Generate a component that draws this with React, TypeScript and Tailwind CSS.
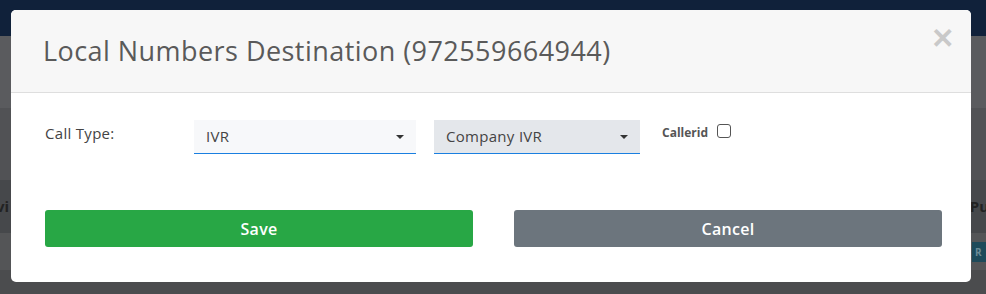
function Caret() {
  return (
    <svg width="8" height="4" viewBox="0 0 8 4" className="shrink-0">
      <path d="M0 0h8L4 4z" fill="#333" />
    </svg>
  )
}

function SelectBox({ value, width, bg }: { value: string; width: string; bg: string }) {
  return (
    <div className={`${width} ${bg} h-[34px] flex items-center justify-between pl-3 pr-[12px] border-b border-b-[#1a7fe0]`}>
      <span className="text-[15px] text-[#444] tracking-[0.3px]">{value}</span>
      <Caret />
    </div>
  )
}

export default function App() {
  return (
    <div className="relative w-[986px] h-[294px] overflow-hidden bg-[#4d4e50]" style={{ fontFamily: '"Open Sans", "Liberation Sans", sans-serif' }}>
      {/* page behind the overlay */}
      <div className="flex flex-col h-full">
        <div className="h-[36px] bg-[#10213a]" />
        <div className="h-[72px] bg-[#5a5b5e]" />
        <div className="h-[72px] bg-[#515255]" />
        <div className="h-[53px] bg-[#46484b] flex items-center justify-between">
          <span className="text-[15px] font-bold text-[#222] -ml-[4px]">vi</span>
          <span className="text-[15px] font-bold text-[#222] mr-[-3px]">Pu</span>
        </div>
        <div className="h-[37px] bg-[#545557] flex items-center justify-end">
          <div className="w-[14px] h-[20px] bg-[#1e4a5a] text-[10px] text-[#6b8a96] font-bold pl-[3px] leading-[20px]">R</div>
        </div>
        <div className="flex-1 bg-[#4b4c4e]" />
      </div>

      <div className="absolute left-[11px] top-[10px] w-[960px] h-[272px] bg-white rounded-[5px] overflow-hidden flex flex-col">
        <div className="h-[83px] bg-[#f7f7f7] border-b-[1.5px] border-[#dedede] relative flex items-center pl-[32px]">
          <h2 className="text-[27px] text-[#5a5a5a] tracking-[0.45px] mt-[1px]">Local Numbers Destination (972559664944)</h2>
          <span className="absolute right-[17px] top-[13px] text-[28px] leading-none font-bold text-[#c9c9c9]">✕</span>
        </div>

        <div className="flex items-start pl-[34px] pt-[27px]">
          <div className="w-[149px] text-[15px] text-[#444] pt-[2px] tracking-[0.3px]">Call Type:</div>
          <SelectBox value="IVR" width="w-[222px]" bg="bg-[#f7f8fa]" />
          <div className="w-[18px]" />
          <SelectBox value="Company IVR" width="w-[206px]" bg="bg-[#e4e7eb]" />
          <div className="flex items-center ml-[22px] gap-[9px]">
            <span className="text-[12px] font-bold text-[#555] pt-[4px]">Callerid</span>
            <span className="w-[14px] h-[14px] rounded-[3px] border border-[#555] bg-white" />
          </div>
        </div>

        <div className="flex gap-[41px] pl-[34px] mt-[56px]">
          <button className="w-[428px] h-[37px] rounded-[3px] bg-[#28a745] text-white text-[16px] font-semibold tracking-[0.3px]">Save</button>
          <button className="w-[428px] h-[37px] rounded-[3px] bg-[#6c757d] text-white text-[16px] font-semibold tracking-[0.3px]">Cancel</button>
        </div>
      </div>
    </div>
  )
}
